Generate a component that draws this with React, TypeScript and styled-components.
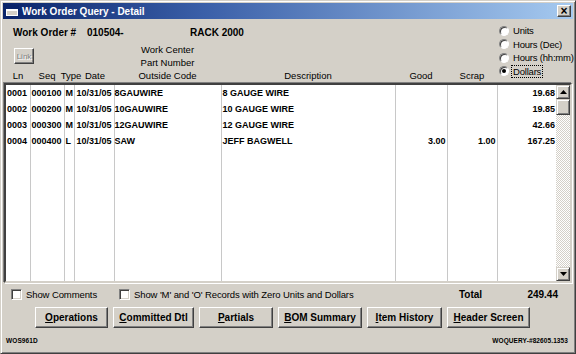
import styled, { createGlobalStyle } from 'styled-components';

const GlobalStyle = createGlobalStyle`
  body {
    margin: 0;
    background: #d4d0c8;
  }
  * {
    box-sizing: border-box;
  }
`;

interface Line {
    ln: string;
    seq: string;
    type: string;
    date: string;
    code: string;
    description: string;
    good: string;
    scrap: string;
    amount: string;
}

const LINES: Line[] = [
    { ln: '0001', seq: '000100', type: 'M', date: '10/31/05', code: '8GAUWIRE', description: '8 GAUGE WIRE', good: '', scrap: '', amount: '19.68' },
    { ln: '0002', seq: '000200', type: 'M', date: '10/31/05', code: '10GAUWIRE', description: '10 GAUGE WIRE', good: '', scrap: '', amount: '19.85' },
    { ln: '0003', seq: '000300', type: 'M', date: '10/31/05', code: '12GAUWIRE', description: '12 GAUGE WIRE', good: '', scrap: '', amount: '42.66' },
    { ln: '0004', seq: '000400', type: 'L', date: '10/31/05', code: 'SAW', description: 'JEFF BAGWELL', good: '3.00', scrap: '1.00', amount: '167.25' },
];

// widths of the grid columns, each including its right rule
const COLS = [24, 34, 10, 40, 107, 174, 52, 50, 59];
const SCROLL_W = 14;
const gridTemplate = [...COLS, SCROLL_W].map((w) => `${w}px`).join(' ');

const MODES = ['Units', 'Hours (Dec)', 'Hours (hh:mm)', 'Dollars'];
const BUTTONS: [string, number][] = [
    ['Operations', 73],
    ['Committed Dtl', 81],
    ['Partials', 74],
    ['BOM Summary', 84],
    ['Item History', 75],
    ['Header Screen', 83],
];

const TitleIcon = () => (
    <svg width="14" height="12" viewBox="0 0 14 12">
        <rect x="0.5" y="0.5" width="13" height="11" fill="#fff" stroke="#0a246a" />
        <rect x="1" y="1" width="12" height="3" fill="#0a246a" />
        <rect x="2" y="6" width="10" height="4" fill="#d4d0c8" />
    </svg>
);

const Arrow = ({ up }: { up?: boolean }) => (
    <svg width="7" height="4" viewBox="0 0 7 4">
        <polygon points={up ? '3.5,0 7,4 0,4' : '0,0 7,0 3.5,4'} fill="#000" />
    </svg>
);

const App = () => {
    return (
        <>
            <GlobalStyle />
            <Window>
                <TitleBar>
                    <TitleIcon />
                    <TitleText>Work Order Query - Detail</TitleText>
                    <CloseButton>×</CloseButton>
                </TitleBar>

                <Content>
                    <HeaderGrid>
                        <OrderRow>
                            <OrderLabel>Work Order #</OrderLabel>
                            <OrderNumber>010504-</OrderNumber>
                            <span>RACK 2000</span>
                        </OrderRow>

                        <LinkButton disabled>Link</LinkButton>
                        <StackedLabels>
                            <span>Work Center</span>
                            <span>Part Number</span>
                        </StackedLabels>

                        <ColLabel>Ln</ColLabel>
                        <ColLabel>Seq</ColLabel>
                        <ColLabel $shift={2}>Type</ColLabel>
                        <ColLabel $shift={1}>Date</ColLabel>
                        <ColLabel>Outside Code</ColLabel>
                        <ColLabel>Description</ColLabel>
                        <ColLabel>Good</ColLabel>
                        <ColLabel>Scrap</ColLabel>

                        <ModeGroup>
                            {MODES.map((mode) => (
                                <ModeOption key={mode}>
                                    <Radio $checked={mode === 'Dollars'} />
                                    <ModeText $focused={mode === 'Dollars'}>{mode}</ModeText>
                                </ModeOption>
                            ))}
                        </ModeGroup>
                    </HeaderGrid>

                    <GridBox>
                        <DataTable>
                            <colgroup>
                                {COLS.map((w, i) => (
                                    <col key={i} style={{ width: w }} />
                                ))}
                            </colgroup>
                            <tbody>
                                {LINES.map((line) => (
                                    <DataRow key={line.ln}>
                                        <Cell>{line.ln}</Cell>
                                        <Cell>{line.seq}</Cell>
                                        <Cell>{line.type}</Cell>
                                        <Cell $pad={2}>{line.date}</Cell>
                                        <Cell $pad={0}>{line.code}</Cell>
                                        <Cell>{line.description}</Cell>
                                        <Cell $right>{line.good}</Cell>
                                        <Cell $right>{line.scrap}</Cell>
                                        <Cell $right $last>{line.amount}</Cell>
                                    </DataRow>
                                ))}
                                <FillerRow>
                                    {COLS.map((_, i) => (
                                        <Cell key={i} $last={i === COLS.length - 1} />
                                    ))}
                                </FillerRow>
                            </tbody>
                        </DataTable>
                        <ScrollBar>
                            <ScrollButton>
                                <Arrow up />
                            </ScrollButton>
                            <ScrollThumb />
                            <ScrollTrack />
                            <ScrollButton>
                                <Arrow />
                            </ScrollButton>
                        </ScrollBar>
                    </GridBox>

                    <OptionsRow>
                        <CheckOption $width={108}>
                            <CheckBox />
                            Show Comments
                        </CheckOption>
                        <CheckOption>
                            <CheckBox />
                            Show 'M' and 'O' Records with Zero Units and Dollars
                        </CheckOption>
                        <TotalLabel>Total</TotalLabel>
                        <TotalValue>249.44</TotalValue>
                    </OptionsRow>

                    <ButtonRow>
                        {BUTTONS.map(([label, width]) => (
                            <ActionButton key={label} $width={width}>
                                <u>{label[0]}</u>
                                {label.slice(1)}
                            </ActionButton>
                        ))}
                    </ButtonRow>

                    <Footer>
                        <span>WOS961D</span>
                        <span>WOQUERY-#82605.1353</span>
                    </Footer>
                </Content>
            </Window>
        </>
    );
};

export default App;

const Window = styled.div`
    width: 576px;
    height: 354px;
    display: flex;
    flex-direction: column;
    padding: 2px;
    background: #d4d0c8;
    border: 1px solid;
    border-color: #d4d0c8 #404040 #404040 #d4d0c8;
    box-shadow: inset 1px 1px #fff, inset -1px -1px #808080;
    font-family: "Liberation Sans", Arial, sans-serif;
    font-size: 10px;
    color: #000;
`;

const TitleBar = styled.div`
    height: 16px;
    flex-shrink: 0;
    display: flex;
    align-items: center;
    gap: 3px;
    padding: 0 2px 0 2px;
    background: linear-gradient(to right, #0a246a 0%, #3a5fa8 35%, #a6caf0 100%);
`;

const TitleText = styled.span`
    color: #fff;
    font-weight: bold;
    font-size: 10px;
    white-space: nowrap;
`;

const CloseButton = styled.div`
    margin-left: auto;
    width: 14px;
    height: 12px;
    display: flex;
    align-items: center;
    justify-content: center;
    background: #d4d0c8;
    border: 1px solid;
    border-color: #fff #404040 #404040 #fff;
    box-shadow: inset -1px -1px #808080;
    font-size: 12px;
    font-weight: bold;
    line-height: 1;
    padding-bottom: 1px;
`;

const Content = styled.div`
    flex: 1;
    display: flex;
    flex-direction: column;
    padding: 0 0 0 1px;
`;

const HeaderGrid = styled.div`
    height: 64px;
    display: grid;
    grid-template-columns: ${gridTemplate};
    grid-template-rows: 24px 26px 14px;
    padding-left: 2px;
    white-space: nowrap;
    font-size: 9.5px;
`;

const OrderRow = styled.div`
    grid-column: 1 / 9;
    grid-row: 1;
    display: flex;
    align-items: center;
    padding: 2px 0 0 7px;
    font-size: 10px;
    font-weight: bold;
`;

const OrderLabel = styled.span`
    width: 74px;
`;

const OrderNumber = styled.span`
    width: 103px;
`;

const LinkButton = styled.button`
    grid-column: 1 / 3;
    grid-row: 2;
    justify-self: start;
    align-self: start;
    margin: 5px 0 0 8px;
    width: 20px;
    height: 16px;
    padding: 0;
    font-family: inherit;
    font-size: 8px;
    color: #808080;
    text-shadow: 1px 1px #fff;
    background: #d4d0c8;
    border: 1px solid;
    border-color: #fff #404040 #404040 #fff;
    box-shadow: inset -1px -1px #808080;
`;

const StackedLabels = styled.div`
    grid-column: 5;
    grid-row: 2;
    display: flex;
    flex-direction: column;
    justify-content: flex-end;
    align-items: center;
    line-height: 13px;
`;

const ColLabel = styled.div<{ $shift?: number }>`
    grid-row: 3;
    display: flex;
    justify-content: center;
    line-height: 14px;
    margin-left: ${(p) => (p.$shift ? `${p.$shift * 2}px` : '0')};
`;

const ModeGroup = styled.div`
    grid-column: 9 / 11;
    grid-row: 1 / 4;
    padding: 5px 0 0 2px;
    display: flex;
    flex-direction: column;
`;

const ModeOption = styled.div`
    height: 13.5px;
    display: flex;
    align-items: center;
    gap: 3px;
`;

const Radio = styled.span<{ $checked?: boolean }>`
    width: 10px;
    height: 10px;
    flex-shrink: 0;
    border-radius: 50%;
    background: #fff;
    border: 1px solid;
    border-color: #808080 #fff #fff #808080;
    box-shadow: inset 1px 1px #404040;
    display: flex;
    align-items: center;
    justify-content: center;

    &::after {
        content: '';
        width: 4px;
        height: 4px;
        border-radius: 50%;
        background: ${(p) => (p.$checked ? '#000' : 'transparent')};
    }
`;

const ModeText = styled.span<{ $focused?: boolean }>`
    line-height: 11px;
    padding: 0 1px;
    letter-spacing: -0.2px;
    outline: ${(p) => (p.$focused ? '1px dotted #000' : 'none')};
`;

const GridBox = styled.div`
    height: 200px;
    display: flex;
    width: 568px;
    background: #fff;
    border: 2px solid;
    border-color: #404040 #d4d0c8 #d4d0c8 #404040;
    box-shadow: -1px -1px #808080, 1px 1px #fff;
`;

const DataTable = styled.table`
    width: 550px;
    height: 100%;
    table-layout: fixed;
    border-collapse: collapse;
    font-size: 9px;
    font-weight: bold;
`;

const DataRow = styled.tr`
    height: 16px;
`;

const FillerRow = styled.tr`
    height: 100%;
`;

const Cell = styled.td<{ $right?: boolean; $last?: boolean; $pad?: number }>`
    padding: 0 1px 0 ${(p) => (p.$pad ?? 1)}px;
    white-space: nowrap;
    overflow: visible;
    text-align: ${(p) => (p.$right ? 'right' : 'left')};
    border-right: ${(p) => (p.$last ? 'none' : '1px solid #c8c8c8')};
`;

const ScrollBar = styled.div`
    width: ${SCROLL_W}px;
    display: flex;
    flex-direction: column;
`;

const ScrollButton = styled.div`
    height: 14px;
    display: flex;
    align-items: center;
    justify-content: center;
    background: #d4d0c8;
    border: 1px solid;
    border-color: #d4d0c8 #404040 #404040 #d4d0c8;
    box-shadow: inset 1px 1px #fff, inset -1px -1px #808080;
`;

const ScrollThumb = styled(ScrollButton)`
    height: 16px;
`;

const ScrollTrack = styled.div`
    flex: 1;
    background: repeating-conic-gradient(#d4d0c8 0 25%, #fff 0 50%) 0 0 / 2px 2px;
`;

const OptionsRow = styled.div`
    height: 21px;
    display: flex;
    align-items: center;
    padding: 2px 0 0 7px;
    white-space: nowrap;
    font-size: 9.5px;
`;

const CheckOption = styled.label<{ $width?: number }>`
    display: flex;
    align-items: center;
    gap: 4px;
    letter-spacing: -0.1px;
    width: ${(p) => (p.$width ? `${p.$width}px` : 'auto')};
    flex: ${(p) => (p.$width ? 'none' : '1')};
`;

const CheckBox = styled.span`
    width: 11px;
    height: 11px;
    background: #fff;
    border: 1px solid;
    border-color: #808080 #fff #fff #808080;
    box-shadow: inset 1px 1px #404040, inset -1px -1px #d4d0c8;
`;

const TotalLabel = styled.span`
    font-size: 10px;
    font-weight: bold;
    width: 39px;
`;

const TotalValue = styled.span`
    font-size: 10px;
    font-weight: bold;
    width: 60px;
    text-align: right;
    margin-right: 15px;
`;

const ButtonRow = styled.div`
    display: flex;
    gap: 5px;
    padding: 3px 0 0 31px;
`;

const ActionButton = styled.button<{ $width: number }>`
    width: ${(p) => p.$width}px;
    height: 21px;
    padding: 0;
    font-family: inherit;
    font-size: 10px;
    font-weight: bold;
    color: #000;
    background: #d4d0c8;
    border: 1px solid;
    border-color: #fff #404040 #404040 #fff;
    box-shadow: inset -1px -1px #808080;
`;

const Footer = styled.div`
    flex: 1;
    display: flex;
    align-items: center;
    justify-content: space-between;
    padding: 2px 5px 0 2px;
    font-size: 6.5px;
    font-weight: bold;
    letter-spacing: 0.1px;
`;
